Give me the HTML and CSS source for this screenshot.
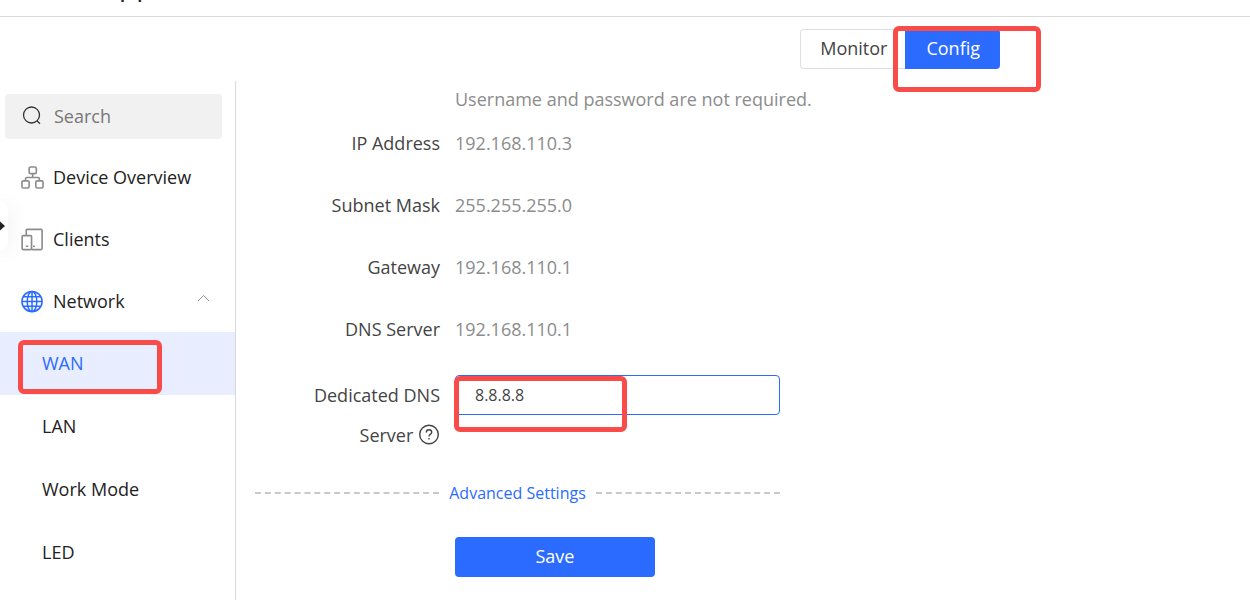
FILE: index.html
```html
<!DOCTYPE html>
<html lang="en">

<head>
    <meta charset="UTF-8">
    <meta name="viewport" content="width=device-width, initial-scale=1.0">
    <title>WAN</title>
    <link rel="stylesheet" href="styles.css">
</head>

<body>
    <header class="header">
        <span class="title">pp</span>
    </header>

    <!-- Monitor / Config switch -->
    <div class="toolbar">
        <div class="tabs">
            <button type="button" class="tab">Monitor</button>
            <button type="button" class="tab tab-active">Config</button>
            <span class="mark mark-config"></span>
        </div>
    </div>

    <div class="layout">
        <aside class="sidebar">
            <label class="search">
                <svg class="search-icon" viewBox="0 0 20 20" fill="none" stroke="#333" stroke-width="1.3">
                    <circle cx="9.5" cy="9" r="8" />
                    <path d="M15 14.7l3 3" />
                </svg>
                <input type="text" class="search-input" placeholder="Search" aria-label="Search">
            </label>

            <nav class="menu">
                <a href="#" class="menu-item">
                    <svg class="menu-icon" viewBox="0 0 24 24" fill="none" stroke="#8c8c8c" stroke-width="1.7">
                        <rect x="8.500" y="1" width="7.500" height="7" rx="1.500" />
                        <rect x="1" y="15.500" width="7.500" height="7.500" rx="1.500" />
                        <rect x="15.500" y="15.500" width="7.500" height="7.500" rx="1.500" />
                        <path d="M12.200 8v4M4.700 15.500v-2q0-1.500 1.500-1.500h11.500q1.500 0 1.500 1.500v2" />
                    </svg>
                    Device Overview
                </a>
                <a href="#" class="menu-item">
                    <svg class="menu-icon" viewBox="0 0 24 24" fill="none" stroke="#8c8c8c" stroke-width="1.7">
                        <path d="M5.500 8V2.500q0-1 1-1h14.500q1 0 1 1v19q0 1-1 1H11" />
                        <rect x="1.200" y="8" width="9.800" height="14.500" rx="1" />
                        <path d="M5 19h2.500M12.500 19h2" />
                    </svg>
                    Clients
                </a>
                <a href="#" class="menu-item">
                    <svg class="menu-icon" viewBox="0 0 24 24" fill="none" stroke="#2b6bff" stroke-width="1.6">
                        <circle cx="11.500" cy="12" r="10.500" />
                        <ellipse cx="11.500" cy="12" rx="5" ry="10.500" />
                        <path d="M11.500 1.500v21M1 12h21M2.500 7h18M2.500 17h18" />
                    </svg>
                    Network
                    <svg class="arrow" viewBox="0 0 12 8" fill="none" stroke="#909399" stroke-width="1">
                        <path d="M0.500 6L6 0.500L11.500 6" />
                    </svg>
                </a>
                <div class="submenu">
                    <a href="#" class="submenu-item submenu-active">WAN<span class="mark mark-wan"></span></a>
                    <a href="#" class="submenu-item">LAN</a>
                    <a href="#" class="submenu-item">Work Mode</a>
                    <a href="#" class="submenu-item">LED</a>
                </div>
            </nav>

            <button type="button" class="expand" aria-label="Expand">
                <svg class="expand-icon" viewBox="0 0 5 10"><path d="M0 0.500L5 5L0 9.500z" fill="#222" /></svg>
            </button>
        </aside>

        <main class="content">
            <form class="form">
                <p class="hint">Username and password are not required.</p>
                <div class="form-item">
                    <span class="label">IP Address</span>
                    <span class="value">192.168.110.3</span>
                </div>
                <div class="form-item">
                    <span class="label">Subnet Mask</span>
                    <span class="value">255.255.255.0</span>
                </div>
                <div class="form-item">
                    <span class="label">Gateway</span>
                    <span class="value">192.168.110.1</span>
                </div>
                <div class="form-item">
                    <span class="label">DNS Server</span>
                    <span class="value">192.168.110.1</span>
                </div>
                <div class="form-item form-item-dns">
                    <label class="label" for="dns">Dedicated DNS Server
                        <svg class="help" viewBox="0 0 22 22" fill="none" stroke="#444" stroke-width="1.4">
                            <circle cx="11" cy="10.500" r="9.300" />
                            <path d="M8.300 8.500q0-2.700 2.700-2.700t2.700 2.400q0 1.300-1.400 2.200-1.300 0.800-1.300 2.100M11 14v1.500" />
                        </svg>
                    </label>
                    <div class="field">
                        <input type="text" id="dns" class="input" value="8.8.8.8">
                        <span class="mark mark-dns"></span>
                    </div>
                </div>

                <div class="divider"><a href="#" class="advanced">Advanced Settings</a></div>

                <button type="button" class="save">Save</button>
            </form>
        </main>
    </div>
</body>
</html>
```

FILE: styles.css
```css
* {
    box-sizing: border-box;
}

body {
    display: flex;
    flex-direction: column;
    height: 100vh;
    margin: 0;
    overflow: hidden;
    background-color: #fff;
    color: #222;
    font-family: "Open Sans", "Noto Sans", sans-serif;
    font-size: 18px;
}

button,
input {
    font-family: inherit;
}

a {
    color: inherit;
    text-decoration: none;
}

.header {
    display: flex;
    align-items: flex-end;
    flex-shrink: 0;
    height: 17px;
    padding: 0 0 14px 119px;
    overflow: hidden;
    border-bottom: 1px solid #d9d9d9;
}

.title {
    font-size: 28px;
    line-height: 36px;
}

.toolbar {
    display: flex;
    justify-content: flex-end;
    flex-shrink: 0;
    height: 64px;
    padding: 12px 250px 0 0;
}

.tabs {
    display: flex;
    position: relative;
    height: 40px;
}

.tab {
    padding: 0 18px 2px 19px;
    border: 1px solid #dcdfe6;
    border-right: none;
    border-radius: 4px 0 0 4px;
    background-color: #fff;
    color: #444;
    font-size: 18px;
    cursor: pointer;
}

.tab-active {
    padding: 0 20px 2px 21px;
    border: none;
    border-radius: 0 4px 4px 0;
    background-color: #2b6bff;
    color: #fff;
}

/* Red highlight boxes */
.mark {
    position: absolute;
    border: 5px solid #f94b48;
    border-radius: 6px;
    pointer-events: none;
}

.mark-config {
    top: -3px;
    right: -41px;
    width: 148px;
    height: 66px;
}

.mark-wan {
    top: 8px;
    left: 18px;
    width: 144px;
    height: 54px;
}

.mark-dns {
    top: 1px;
    left: -1px;
    width: 173px;
    height: 56px;
}

.layout {
    display: flex;
    flex: 1;
    min-height: 0;
}

.sidebar {
    position: relative;
    flex-shrink: 0;
    width: 236px;
    border-right: 1px solid #d9d9d9;
}

.search {
    display: flex;
    align-items: center;
    gap: 12px;
    height: 45px;
    margin: 13px 13px 7px 5px;
    padding: 0 17px 2px;
    border-radius: 4px;
    background-color: #f1f1f1;
}

.search-icon {
    flex-shrink: 0;
    width: 20px;
    height: 20px;
}

.search-input {
    width: 100%;
    padding: 0;
    border: none;
    outline: none;
    background: none;
    font-size: 18px;
}

.search-input::placeholder {
    color: #777;
}

.menu-item {
    display: flex;
    align-items: center;
    gap: 9px;
    height: 62px;
    padding: 0 25px 0 21px;
}

.menu-icon {
    width: 23px;
    height: 23px;
}

.arrow {
    width: 13px;
    height: 8px;
    margin: 0 0 4px auto;
}

.submenu-item {
    display: flex;
    align-items: center;
    position: relative;
    height: 63px;
    padding: 0 0 1px 42px;
}

.submenu-active {
    background-color: #e8eeff;
    color: #2b6bff;
}

/* Drawer handle on the left edge */
.expand {
    display: flex;
    align-items: center;
    position: absolute;
    top: 121px;
    left: 0;
    width: 8px;
    height: 48px;
    padding: 0;
    border: none;
    border-radius: 0 8px 8px 0;
    background-color: #fff;
    box-shadow: 0 2px 20px rgba(0, 0, 0, 0.1);
    cursor: pointer;
}

.expand-icon {
    width: 5px;
    height: 10px;
}

.content {
    flex: 1;
    padding: 6px 19px;
}

.form {
    max-width: 563px;
    padding-right: 38px;
}

.hint {
    margin: 0 0 12px 200px;
    color: #8c8c8c;
    line-height: 24px;
}

.form-item {
    display: flex;
    gap: 15px;
    margin-bottom: 22px;
    line-height: 40px;
}

.form-item-dns {
    margin: 26px 0 28px;
}

.label {
    flex-shrink: 0;
    width: 185px;
    padding-left: 50px;
    color: #444;
    text-align: right;
}

.value {
    color: #8c8c8c;
}

.help {
    width: 22px;
    height: 22px;
    vertical-align: -4px;
}

.field {
    flex: 1;
    position: relative;
    height: 40px;
}

.input {
    display: block;
    width: 100%;
    height: 40px;
    padding: 0 19px;
    border: 1px solid #2b6bff;
    border-radius: 4px;
    outline: none;
    color: #444;
    font-size: 16px;
}

.divider {
    display: flex;
    align-items: center;
    gap: 10px;
    line-height: 20px;
}

.divider::before,
.divider::after {
    content: "";
    flex: 1;
    border-top: 2px dashed #c9c9c9;
}

.advanced {
    color: #2b6bff;
    font-size: 16px;
}

.hint {
    margin-right: -38px;
}

.save {
    display: block;
    width: 200px;
    height: 40px;
    margin: 34px 0 0 200px;
    padding: 0 0 2px;
    border: none;
    border-radius: 4px;
    background-color: #2b6bff;
    color: #fff;
    font-size: 18px;
    cursor: pointer;
}
```
